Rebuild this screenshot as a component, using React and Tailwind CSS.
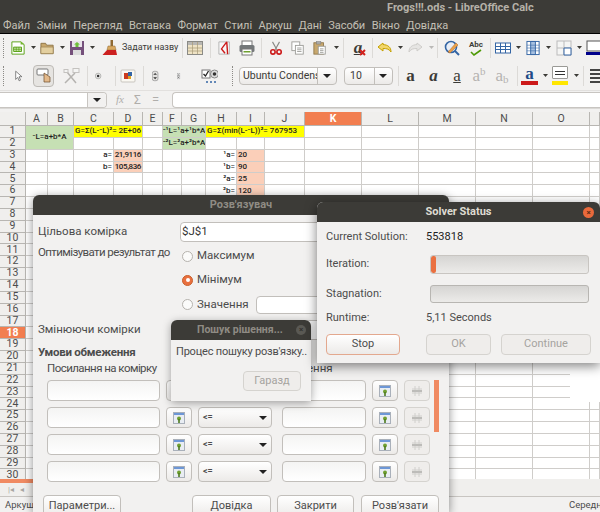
import React from "react";

const menus = ["Файл", "Зміни", "Перегляд", "Вставка", "Формат", "Стилі", "Аркуш", "Дані", "Засоби", "Вікно", "Довідка"];
const cols = ["A", "B", "C", "D", "E", "F", "G", "H", "I", "J", "K", "L", "M", "N", "O", "P"];
const rows = Array.from({ length: 30 }, (_, i) => i + 1);

const green = "bg-[#c6e0b4]";
const yellow = "bg-[#ffff00]";
const peach = "bg-[#fbcfb9]";

const cells = {
    A1: { cls: `col-span-2 row-span-2 justify-center ${green}`, text: "⁻L=a+b*A" },
    C1: { cls: `col-span-2 justify-between ${yellow}`, text: "G=Σ(L-⁻L)²=", text2: "2E+06" },
    F1: { cls: `col-span-2 justify-center ${green}`, text: "⁻¹L=¹a+¹b*A" },
    F2: { cls: `col-span-2 justify-center ${green}`, text: "⁻²L=²a+²b*A" },
    H1: { cls: `col-span-3 justify-start ${yellow}`, text: "G=Σ(min(L-⁻L))²= 767953" },
    C3: { cls: "justify-end", text: "a=" },
    C4: { cls: "justify-end", text: "b=" },
    D3: { cls: `justify-end tracking-[-0.4px] ${peach}`, text: "21,9116" },
    D4: { cls: `justify-end tracking-[-0.4px] ${peach}`, text: "105,836" },
    H3: { cls: "justify-end", text: "¹a=" },
    H4: { cls: "justify-end", text: "¹b=" },
    H5: { cls: "justify-end", text: "²a=" },
    H6: { cls: "justify-end", text: "²b=" },
    I3: { cls: `justify-start ${peach}`, text: "20" },
    I4: { cls: `justify-start ${peach}`, text: "90" },
    I5: { cls: `justify-start ${peach}`, text: "25" },
    I6: { cls: `justify-start ${peach}`, text: "120" },
};
const skip = ["B1", "A2", "B2", "D1", "G1", "G2", "I1", "J1"];

const Sep = ({ className = "" }) => <div className={`w-px h-[20px] bg-[#dcdad7] shrink-0 ${className}`} />;
const Dots = ({ className = "" }) => <div className={`w-px h-[20px] border-l border-dotted border-[#8c8a86] shrink-0 ${className}`} />;
const Arrow = ({ className = "" }) => (
    <svg viewBox="0 0 5 3" className={`w-[5px] h-[3px] shrink-0 ${className}`}>
        <path d="M0 0h5L2.5 3z" fill="#3c3b37" />
    </svg>
);
const Caret = () => (
    <svg viewBox="0 0 8 4" className="w-[8px] h-[4px]">
        <path d="M0 0h8L4 4z" fill="#222" />
    </svg>
);

const Ic = ({ w = 16, className = "", children }) => (
    <svg viewBox="0 0 16 16" style={{ width: w, height: 16 }} className={`shrink-0 ${className}`}>
        {children}
    </svg>
);

const TableIc = ({ className, w }) => (
    <Ic className={className} w={w}>
        <rect x="0.5" y="3" width="15" height="10" fill="#fff" stroke="#3465a4" />
        <path d="M0 6.5h16M0 9.5h16M5.5 3v10M10.5 3v10" stroke="#3465a4" />
    </Ic>
);

const Radio = ({ on }) => (
    <span className={`w-[11px] h-[11px] rounded-full border flex items-center justify-center shrink-0 ${on ? "border-[#c9602c] bg-[#e9703f]" : "border-[#b5b2ad] bg-[#fbfbfa]"}`}>
        {on && <span className="w-[4px] h-[4px] rounded-full bg-white" />}
    </span>
);

const Btn = ({ className = "", disabled, children }) => (
    <div className={`flex items-center justify-center rounded-[4px] border text-[11px] shrink-0 ${disabled ? "border-[#d5d3cf] bg-[#efedeb] text-[#a5a39f]" : "border-[#c2bfbb] bg-gradient-to-b from-white to-[#eceae8] text-[#4c4c4c]"} ${className}`}>
        {children}
    </div>
);

const Field = ({ className = "", children }) => (
    <div className={`rounded-[4px] border border-[#c2bfbb] bg-gradient-to-b from-[#f4f4f3] to-white h-[21px] flex items-center shrink-0 ${className}`}>
        {children}
    </div>
);

const PinIc = () => (
    <svg viewBox="0 0 12 12" className="w-[12px] h-[12px]">
        <rect x="0.5" y="0.5" width="11" height="11" fill="#e9edf3" stroke="#a9b0ba" />
        <rect x="1" y="1" width="10" height="2" fill="#6d97d6" />
        <circle cx="6" cy="6.5" r="2" fill="#6fa030" />
        <rect x="5.200" y="7" width="1.600" height="4" fill="#4e7a1e" />
    </svg>
);

const GridIc = () => (
    <svg viewBox="0 0 12 12" className="w-[12px] h-[12px]">
        <path d="M4 1v10M8 1v10M1 4h10M1 8h10" stroke="#d0cfcc" />
        <rect x="1" y="5" width="10" height="2" fill="#bdbcb9" />
    </svg>
);

const ConstraintRow = () => (
    <div className="flex items-center ml-[14px] h-[21px]">
        <Field className="w-[113px]" />
        <Btn className="w-[26px] h-[21px] ml-[6px]"><PinIc /></Btn>
        <Btn className="w-[74px] h-[21px] ml-[6px] !justify-between px-[4px]">
            <span className="text-[9px] font-bold">{"<="}</span>
            <Caret />
        </Btn>
        <Field className="w-[84px] ml-[10px]" />
        <Btn className="w-[26px] h-[21px] ml-[6px]"><PinIc /></Btn>
        <Btn disabled className="w-[26px] h-[21px] ml-[6px]"><GridIc /></Btn>
    </div>
);

const Toolbar1 = () => (
    <div className="flex items-center h-[27px] bg-[#f2f1f0]">
        <Dots className="ml-[3px]" />
        <Ic w={14} className="ml-[7px]">
            <path d="M1 1h10l4 3v11H1z" fill="#fff" stroke="#4e9a06" />
            <path d="M3 7h9v5H3z" fill="#c5e2a5" stroke="#4e9a06" />
            <path d="M6 7v5M9 7v5M3 9.5h9" stroke="#4e9a06" strokeWidth=".7" />
            <path d="M11 0l4 4h-4z" fill="#73b52d" />
        </Ic>
        <Arrow className="ml-[6px]" />
        <Ic w={15} className="ml-[4px]">
            <path d="M1 3h5l1 2h7v9H1z" fill="#c8a86e" stroke="#8f7548" />
            <path d="M1 7h13v7H1z" fill="#e3cf9f" stroke="#8f7548" strokeWidth=".6" />
        </Ic>
        <Arrow className="ml-[5px]" />
        <Ic className="ml-[4px]">
            <rect x="1" y="1" width="14" height="14" fill="#75507b" />
            <rect x="3" y="1" width="10" height="6" fill="#e9e4ea" />
            <rect x="4" y="10" width="8" height="5" fill="#ddd" />
            <path d="M8 2l3 2.5H9.5V7h-3V4.500H5z" fill="#6fbf3a" />
        </Ic>
        <Arrow className="ml-[5px]" />
        <Ic w={17} className="ml-[6px]">
            <rect x="9" y="0" width="2.500" height="6" fill="#8f6a33" />
            <path d="M6.500 6h7l1 4h-9z" fill="#d9a860" stroke="#8f6a33" strokeWidth=".5" />
            <path d="M5.500 10h9l1 5H1z" fill="#cc2020" />
        </Ic>
        <span className="ml-[4px] w-[52px] whitespace-nowrap text-[9px] text-[#3c3b37]">Задати назву</span>
        <Sep className="ml-[8px]" />
        <Ic className="ml-[4px]">
            <rect x="0.5" y="1.500" width="15" height="13" fill="#efe3c5" stroke="#8a8a86" />
            <rect x="1" y="2" width="14" height="3" fill="#b8b7b3" />
            <path d="M5.500 2v12M10.500 2v12M1 8h14M1 11h14" stroke="#a79a76" strokeWidth=".7" />
        </Ic>
        <Sep className="ml-[7px]" />
        <Ic w={14} className="ml-[7px]">
            <path d="M1 1h12v14H1z" fill="#f7f7f7" stroke="#b0b0b0" />
            <path d="M10 1L4 9l4 5M10 1l1 14" stroke="#cc1a1a" strokeWidth="1.600" fill="none" />
        </Ic>
        <Ic className="ml-[7px]">
            <rect x="3" y="1" width="10" height="5" fill="#fff" stroke="#777" />
            <rect x="0.500" y="5" width="15" height="7" rx="1.500" fill="#74787a" />
            <rect x="3" y="9" width="10" height="6" fill="#fff" stroke="#777" />
            <rect x="4.500" y="11" width="7" height="1.500" fill="#6fa030" />
        </Ic>
        <Sep className="ml-[6px]" />
        <Ic w={14} className="ml-[7px]">
            <path d="M4 1l5 9M12 1L7 10" stroke="#8a8a86" strokeWidth="1.300" />
            <circle cx="4.500" cy="12.500" r="2.500" fill="none" stroke="#cc1a1a" strokeWidth="1.800" />
            <circle cx="11.500" cy="12.500" r="2.500" fill="none" stroke="#cc1a1a" strokeWidth="1.800" />
        </Ic>
        <Ic w={14} className="ml-[8px]">
            <rect x="1" y="1" width="9" height="10" fill="#fff" stroke="#9a9a96" />
            <rect x="5" y="5" width="9" height="10" fill="#fff" stroke="#9a9a96" />
            <path d="M7 8h5M7 10h5M7 12h5" stroke="#9a9a96" />
        </Ic>
        <Ic w={14} className="ml-[8px]">
            <rect x="1" y="2" width="11" height="13" fill="#c8a86e" stroke="#8f7548" />
            <rect x="4" y="0.500" width="5" height="3" fill="#aaa" stroke="#777" strokeWidth=".5" />
            <rect x="6" y="6" width="8" height="9" fill="#fff" stroke="#9a9a96" />
            <path d="M8 9h4M8 11h4M8 13h4" stroke="#9a9a96" />
        </Ic>
        <Arrow className="ml-[7px]" />
        <Sep className="ml-[4px]" />
        <div className="relative ml-[6px] w-[16px] h-[16px] shrink-0 flex items-center justify-center">
            <span className="font-['Liberation_Serif'] italic font-bold text-[17px] leading-[14px] text-[#3c3b37] underline">a</span>
            <svg viewBox="0 0 7 7" className="absolute right-0 bottom-0 w-[7px] h-[7px]">
                <path d="M1 1l5 5M6 1L1 6" stroke="#d2201c" strokeWidth="2" />
            </svg>
        </div>
        <Sep className="ml-[6px]" />
        <Ic className="ml-[4px]">
            <path d="M6 3L1 7l5 4V8.500c4 0 6 .5 8 3.500 0-5-3-7-8-7.500z" fill="#f2d66a" stroke="#c4a000" />
        </Ic>
        <Arrow className="ml-[5px]" />
        <Ic className="ml-[4px]">
            <path d="M10 3l5 4-5 4V8.500c-4 0-6 .5-8 3.500 0-5 3-7 8-7.500z" fill="#e6e5e3" stroke="#cfcdca" />
        </Ic>
        <Arrow className="ml-[6px] opacity-30" />
        <Sep className="ml-[3px]" />
        <Ic className="ml-[6px]">
            <circle cx="7" cy="7" r="5.500" fill="#e8eef7" stroke="#3465a4" strokeWidth="1.600" />
            <path d="M11 11l4 4" stroke="#3465a4" strokeWidth="2" />
            <path d="M4 12l8-9 2 2-8 8z" fill="#e9a14a" stroke="#b5651d" strokeWidth=".5" />
        </Ic>
        <div className="relative ml-[8px] w-[16px] h-[16px] shrink-0 flex justify-center">
            <span className="text-[8px] leading-[9px] font-bold text-[#3c3b37]">Abc</span>
            <svg viewBox="0 0 12 7" className="absolute left-[2px] bottom-0 w-[12px] h-[7px]">
                <path d="M1 3l3 3 7-5" stroke="#4e9a06" strokeWidth="1.600" fill="none" />
            </svg>
        </div>
        <Sep className="ml-[6px]" />
        <TableIc className="ml-[4px]" />
        <Arrow className="ml-[5px]" />
        <Ic w={15} className="ml-[5px]">
            <rect x="1" y="1" width="13" height="14" fill="#fff" stroke="#3465a4" />
            <rect x="5" y="1" width="5" height="14" fill="#a7c0e0" stroke="#3465a4" />
            <path d="M1 5h13M1 8h13M1 11h13" stroke="#3465a4" strokeWidth=".6" />
        </Ic>
        <Arrow className="ml-[5px]" />
        <Ic className="ml-[5px]">
            <rect x="1" y="1" width="14" height="14" fill="#f5f5f4" stroke="#bbb" />
            <path d="M8 1v14M1 8h14" stroke="#bbb" />
            <path d="M8 8h7v7H8z" fill="#fff" stroke="#3465a4" />
        </Ic>
        <Arrow className="ml-[5px]" />
        <Ic className="ml-[4px]">
            <rect x="1" y="1" width="14" height="10" fill="#fff" stroke="#555" />
            <rect x="0" y="12" width="16" height="3" fill="#00008b" />
        </Ic>
    </div>
);

const Letter = ({ className = "", children }) => (
    <span className={`font-['Liberation_Serif'] text-[17px] leading-[16px] shrink-0 text-center ${className}`}>{children}</span>
);

const Toolbar2 = () => (
    <div className="flex items-center h-[29px] bg-[#f2f1f0]">
        <Dots className="ml-[3px]" />
        <Ic w={11} className="ml-[11px]">
            <path d="M1 1l9 8H6l2 5-2 1-2-5-3 3z" fill="#fff" stroke="#555" />
        </Ic>
        <div className="ml-[7px] w-[21px] h-[22px] rounded-[4px] border border-[#bdbab6] bg-[#e6e4e1] flex items-center justify-center shrink-0">
            <Ic>
                <rect x="1" y="1" width="11" height="6" rx="1" fill="#fff" stroke="#777" />
                <path d="M8 5v9h6V9z" fill="#e3b98a" stroke="#6a4a2a" strokeWidth=".7" />
            </Ic>
        </div>
        <Ic w={18} className="ml-[8px]">
            <path d="M2 15L12 5M4 4l9 11" stroke="#b5b3b0" strokeWidth="1.500" />
            <rect x="10" y="0.500" width="6" height="4" fill="#f4f4f3" stroke="#c4c2bf" />
            <rect x="1" y="1.500" width="4" height="3" fill="#f4f4f3" stroke="#c4c2bf" />
        </Ic>
        <Sep className="ml-[7px]" />
        <Ic w={10} className="ml-[7px]">
            <circle cx="5" cy="8" r="4.500" fill="#e8e8e7" stroke="#9a9a96" />
            <circle cx="5" cy="8" r="2" fill="#333" />
        </Ic>
        <Sep className="ml-[10px]" />
        <Ic className="ml-[4px]">
            <rect x="1" y="2" width="14" height="12" rx="1" fill="#faf8f2" stroke="#c8c5bf" />
            <rect x="4" y="5" width="4" height="6" fill="#cc3a1c" />
            <rect x="8" y="4" width="4" height="4" fill="#3465a4" />
            <rect x="8" y="8" width="3" height="3" fill="#e0a020" />
        </Ic>
        <Sep className="ml-[7px]" />
        <Ic w={10} className="ml-[8px]">
            <rect x="0.500" y="0.500" width="9" height="15" rx="3" fill="#e2e1df" stroke="#888" />
            <path d="M2 6l3-3 3 3zM2 10l3 3 3-3z" fill="#333" />
        </Ic>
        <Ic w={7} className="ml-[15px]">
            <rect x="0.500" y="2" width="6" height="5.500" fill="#fff" stroke="#999" />
            <rect x="0.500" y="9" width="6" height="5.500" fill="#fff" stroke="#999" />
            <path d="M2 6l1.500-2L5 6zM2 10.500l1.500 2 1.500-2z" fill="#333" />
        </Ic>
        <Ic w={18} className="ml-[16px]">
            <rect x="1" y="2" width="8" height="8" fill="#fff" stroke="#777" />
            <path d="M2.500 6l2 2 3-5" stroke="#222" strokeWidth="1.300" fill="none" />
            <circle cx="13.500" cy="6" r="4" fill="#ddd" stroke="#888" />
            <circle cx="13.500" cy="6" r="1.800" fill="#333" />
            <path d="M5 14h2M9 14h2M13 14h2" stroke="#3465a4" strokeWidth="1.500" />
        </Ic>
        <Dots className="ml-[14px]" />
        <Btn className="ml-[6px] w-[98px] h-[18px] !justify-start overflow-hidden">
            <span className="w-[79px] pl-[3px] text-[10.5px] whitespace-nowrap overflow-hidden text-[#3c3b37]">Ubuntu Condensed</span>
            <span className="w-[19px] h-full border-l border-[#c2bfbb] flex items-center justify-center"><Caret /></span>
        </Btn>
        <Btn className="ml-[7px] w-[49px] h-[18px] !justify-start overflow-hidden">
            <span className="w-[30px] pl-[5px] text-[10.5px] text-[#3c3b37]">10</span>
            <span className="w-[19px] h-full border-l border-[#c2bfbb] flex items-center justify-center"><Caret /></span>
        </Btn>
        <Sep className="ml-[5px]" />
        <Letter className="ml-[5px] w-[13px] font-bold text-[#3c3b37]">a</Letter>
        <Letter className="ml-[10px] w-[13px] font-bold italic text-[#3c3b37]">a</Letter>
        <Letter className="ml-[11px] w-[12px] underline text-[#3c3b37]">a</Letter>
        <Letter className="ml-[7px] w-[18px] text-[#b5b3b0]">a<sup className="text-[11px]">b</sup></Letter>
        <Letter className="ml-[6px] w-[16px] text-[#b5b3b0]">a<sub className="text-[11px]">b</sub></Letter>
        <Sep className="ml-[7px]" />
        <div className="ml-[3px] w-[17px] h-[19px] flex flex-col items-center shrink-0">
            <Letter className="font-bold text-[#204a87] h-[15px]">a</Letter>
            <div className="w-full h-[4px] bg-[#cc1a1a]" />
        </div>
        <Arrow className="ml-[5px]" />
        <div className="ml-[4px] w-[16px] h-[19px] flex flex-col items-center shrink-0">
            <div className="w-full h-[13px] rounded-[1px] border border-[#9a9a96] bg-white flex flex-col justify-center gap-[2px] px-[2px]">
                <div className="h-px bg-[#333]" />
                <div className="h-px bg-[#333]" />
            </div>
            <div className="w-full h-[4px] mt-[2px] bg-[#ffe600]" />
        </div>
        <Arrow className="ml-[6px]" />
        <Sep className="ml-[4px]" />
        <div className="ml-[6px] w-[12px] flex flex-col gap-[2px] shrink-0">
            <div className="h-[2px] bg-[#444]" />
            <div className="h-[2px] bg-[#444]" />
            <div className="h-[2px] bg-[#444]" />
            <div className="h-[2px] bg-[#444]" />
        </div>
    </div>
);

const FormulaBar = () => (
    <div className="flex items-center h-[18px] bg-[#f2f1f0] border-t border-[#e2e0de]">
        <div className="flex w-[107px] h-[16px] rounded-r-[4px] border border-l-0 border-[#c8c5c1] bg-white shrink-0">
            <div className="flex-1" />
            <div className="w-[19px] border-l border-[#c8c5c1] bg-[#f2f1f0] rounded-r-[4px] flex items-center justify-center"><Caret /></div>
        </div>
        <span className="ml-[9px] w-[12px] font-['Liberation_Serif'] italic text-[11px] text-[#b0aeab]">fx</span>
        <span className="ml-[6px] w-[10px] text-[12px] text-[#b0aeab] leading-none">Σ</span>
        <span className="ml-[8px] w-[9px] text-[13px] text-[#b0aeab] leading-none">=</span>
        <div className="ml-[11px] flex-1 h-[16px] rounded-l-[4px] border border-r-0 border-[#c8c5c1] bg-white" />
    </div>
);

const Sheet = () => (
    <div className="grid grid-cols-[26px_22px_26px_40px_29px_20px_19px_24px_31px_28px_40px_57px_57px_57px_57px_57px_1fr] grid-rows-[14px] auto-rows-[11.85px] bg-white shrink-0">
        <div className="bg-[#f0efed] border-r border-b border-[#b8b6b2]" />
        {cols.map((c) => (
            <div
                key={c}
                className={`flex items-center justify-center text-[10.5px] border-r border-b border-[#b8b6b2] ${c === "K" ? "bg-[#f27e50] text-white font-bold" : "bg-[#f0efed] text-[#4c4c4c]"}`}
            >
                {c === "P" ? "" : c}
            </div>
        ))}
        {rows.map((r) => (
            <React.Fragment key={r}>
                <div className={`flex items-center justify-center text-[10.5px] leading-none border-r border-b border-[#b8b6b2] ${r === 18 ? "bg-[#f27e50] text-white font-bold" : "bg-[#f0efed] text-[#4c4c4c]"}`}>
                    {r}
                </div>
                {cols.map((c) => {
                    const id = `${c}${r}`;
                    if (skip.includes(id)) return null;
                    const cell = cells[id];
                    return (
                        <div
                            key={id}
                            className={`flex items-center px-px border-r border-b border-[#cfcdca] overflow-hidden whitespace-nowrap font-medium text-[8px] text-[#222] ${cell ? cell.cls : ""}`}
                        >
                            {cell && <span>{cell.text}</span>}
                            {cell && cell.text2 && <span>{cell.text2}</span>}
                        </div>
                    );
                })}
            </React.Fragment>
        ))}
    </div>
);

const BottomBars = () => (
    <>
        <div className="flex h-[18px] -mt-[2px] bg-[#f0efed] border-b border-[#c8c5c1] shrink-0">
            <div className="w-[33px] border-t-[4px] border-[#f08a62] flex items-center text-[#a8a6a2] text-[8px] gap-[6px] pl-[8px]">
                <span>|◂</span>
                <span>◂</span>
            </div>
        </div>
        <div className="flex items-center flex-1 bg-[#f2f1f0] text-[9.5px] text-[#4c4c4c]">
            <span className="ml-[5px] w-[26px]">Аркуш</span>
            <div className="ml-[424px] w-px h-[12px] bg-[#8a8a86]" />
            <span className="ml-[114px] whitespace-nowrap">Середнє</span>
        </div>
    </>
);

const SolverDialog = () => (
    <div className="absolute left-[33px] top-[195px] w-[416px] h-[317px] rounded-t-[6px] overflow-hidden bg-[#f2f1f0] text-[11.5px] text-[#4c4c4c] shadow-[0_2px_10px_rgba(0,0,0,0.45)]">
        <div className="h-[20px] bg-[#3c3b37] flex items-center justify-center font-bold text-[11px] text-[#8f8b84]">Розв'язувач</div>
        <div className="grid grid-cols-[142px_1fr] pl-[5px] mt-[7px] h-[20px] items-center">
            <span>Цільова комірка</span>
            <div className="w-[270px] h-[20px] rounded-[4px] border border-[#c2bfbb] bg-white pl-px flex items-center text-[#333]">$J$1</div>
        </div>
        <div className="grid grid-cols-[142px_1fr] pl-[5px] mt-[2px]">
            <span className="leading-[16px] whitespace-nowrap tracking-[-0.6px]">Оптимізувати результат до</span>
            <div className="flex flex-col">
                <div className="flex items-center h-[24px] gap-[4px] pl-[2px]"><Radio /><span>Максимум</span></div>
                <div className="flex items-center h-[24px] gap-[4px] pl-[2px]"><Radio on /><span>Мінімум</span></div>
                <div className="flex items-center h-[25px] gap-[4px] pl-[2px]">
                    <Radio />
                    <span className="w-[50px]">Значення</span>
                    <div className="ml-[5px] w-[90px] h-[18px] rounded-[4px] border border-[#c2bfbb] bg-white shrink-0" />
                </div>
            </div>
        </div>
        <div className="grid grid-cols-[142px_1fr] pl-[5px] h-[24px] mt-[1px] items-center">
            <span>Змінюючи комірки</span>
            <div className="w-[270px] h-[20px] rounded-[4px] border border-[#c2bfbb] bg-white" />
        </div>
        <div className="pl-[5px] mt-[2px] h-[17px] flex items-center font-bold tracking-[-0.25px]">Умови обмеження</div>
        <div className="flex pl-[14px] h-[16px] items-center">
            <span className="w-[234px] tracking-[-0.55px]">Посилання на комірку</span>
            <span>Значення</span>
        </div>
        <div className="relative mt-[3px] flex flex-col gap-[6px]">
            <ConstraintRow />
            <ConstraintRow />
            <ConstraintRow />
            <ConstraintRow />
            <div className="absolute left-[401px] top-0 w-[5px] h-[52px] bg-[#f08a62]" />
        </div>
        <div className="flex mt-[13px]">
            <Btn className="ml-[10px] w-[78px] h-[23px]">Параметри...</Btn>
            <Btn className="ml-[71px] w-[79px] h-[23px]">Довідка</Btn>
            <Btn className="ml-[6px] w-[77px] h-[23px]">Закрити</Btn>
            <Btn className="ml-[7px] w-[78px] h-[23px]">Розв'язати</Btn>
        </div>
    </div>
);

const SearchDialog = () => (
    <div className="absolute left-[171px] top-[320px] w-[140px] h-[81px] rounded-t-[6px] overflow-hidden bg-[#f2f1f0] text-[#4c4c4c] shadow-[0_2px_8px_rgba(0,0,0,0.35)]">
        <div className="relative h-[20px] bg-[#3c3b37] flex items-center pl-[26px] font-bold text-[10.5px] text-[#8f8b84]">
            <span className="whitespace-nowrap">Пошук рішення...</span>
            <span className="absolute right-[5px] top-[5px] w-[10px] h-[10px] rounded-full bg-[#5a5954] flex items-center justify-center text-[8px] leading-none text-[#32312e]">×</span>
        </div>
        <div className="pl-[5px] mt-[5px] h-[14px] flex items-center text-[11px] tracking-[-0.2px] whitespace-nowrap">Процес пошуку розв'язку..</div>
        <Btn disabled className="ml-[72px] mt-[12px] w-[58px] h-[20px]">Гаразд</Btn>
    </div>
);

const StatusDialog = () => (
    <div className="absolute left-[317px] top-[202px] w-[283px] h-[161px] rounded-t-[6px] overflow-hidden bg-[#f2f1f0] text-[11px] text-[#4c4c4c] shadow-[0_3px_12px_rgba(0,0,0,0.5)]">
        <div className="relative h-[20px] bg-[#3c3b37] flex items-center justify-center font-bold text-[11px] text-[#dfdbd2]">
            Solver Status
            <span className="absolute right-[6px] top-[5px] w-[11px] h-[11px] rounded-full bg-[#e9693b] flex items-center justify-center text-[8px] leading-none text-[#5a2a14]">×</span>
        </div>
        <div className="flex items-center h-[14px] mt-[8px] pl-[9px]">
            <span className="w-[100px]">Current Solution:</span>
            <span className="text-[#222]">553818</span>
        </div>
        <div className="flex items-center h-[19px] mt-[11px] pl-[9px]">
            <span className="w-[104px]">Iteration:</span>
            <div className="w-[159px] h-[19px] rounded-[3px] border border-[#c8c5c1] bg-gradient-to-b from-[#d6d5d3] to-[#ecebe9] overflow-hidden">
                <div className="w-[5px] h-full rounded-[2px] bg-[#ea7040]" />
            </div>
        </div>
        <div className="flex items-center h-[18px] mt-[11px] pl-[9px]">
            <span className="w-[104px]">Stagnation:</span>
            <div className="w-[159px] h-[18px] rounded-[3px] border border-[#b8b6b2] bg-gradient-to-b from-[#d6d5d3] to-[#ecebe9]" />
        </div>
        <div className="flex items-center h-[14px] mt-[8px] pl-[9px]">
            <span className="w-[100px]">Runtime:</span>
            <span>5,11 Seconds</span>
        </div>
        <div className="flex mt-[9px] pl-[9px]">
            <Btn className="w-[74px] h-[21px] !border-[#e3a88e]">Stop</Btn>
            <Btn disabled className="ml-[26px] w-[65px] h-[21px]">OK</Btn>
            <Btn disabled className="ml-[10px] w-[90px] h-[21px]">Continue</Btn>
        </div>
    </div>
);

const App = () => {
    return (
        <div className="relative w-[600px] h-[512px] overflow-hidden flex flex-col bg-[#f2f1f0] font-['Roboto',sans-serif]">
            <div className="h-[33px] bg-[#3c3b37] shrink-0">
                <div className="h-[19px] pl-[387px] pt-px text-[11px] leading-[14px] font-bold text-[#b5b1a8] whitespace-nowrap">Frogs!!!.ods - LibreOffice Calc</div>
                <div className="h-[14px] flex items-center gap-[6.5px] pl-[3px] pt-px text-[11px] text-[#c4c0b6] whitespace-nowrap">
                    {menus.map((m) => (
                        <span key={m}>{m}</span>
                    ))}
                </div>
            </div>
            <div className="h-px bg-black shrink-0" />
            <Toolbar1 />
            <Toolbar2 />
            <FormulaBar />
            <div className="h-[4px] bg-[#f2f1f0] border-t border-[#dad8d5] shrink-0" />
            <Sheet />
            <BottomBars />

            {/* repaint gap left under the status window */}
            <div className="absolute left-[570px] top-[360px] w-[30px] h-[42px] bg-white" />

            <SolverDialog />
            <SearchDialog />
            <StatusDialog />
        </div>
    );
};

export default App;
